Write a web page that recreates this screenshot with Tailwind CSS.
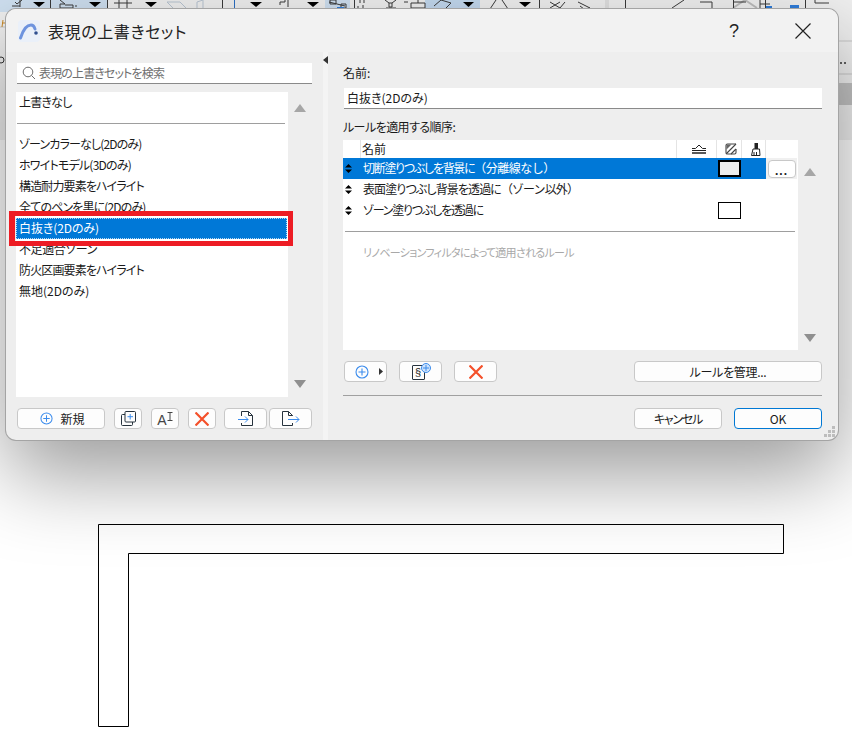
<!DOCTYPE html>
<html lang="ja">
<head>
<meta charset="utf-8">
<script src="https://cdn.jsdelivr.net/npm/@tailwindcss/browser@4"></script>
</head>
<body class="bg-white">
<div class="relative w-[852px] h-[751px] overflow-hidden bg-white font-['Noto_Sans_CJK_JP','Noto_Sans',sans-serif] [font-feature-settings:'palt'] text-[12px] leading-[21px] text-[#1a1a1a]">

  <!-- app toolbar behind the dialog -->
  <svg class="absolute left-0 top-0" width="852" height="140" viewBox="0 0 852 140" fill="none">
    <rect width="852" height="140" fill="#f0f0f0"/>
    <rect x="0" y="0" width="107" height="12" fill="#cfe0f1"/>
    <rect x="325" y="0" width="25" height="12" fill="#cfe0f1"/>
    <rect x="425" y="0" width="55" height="12" fill="#c3d9ef"/>
    <rect x="839" y="83" width="13" height="22" fill="#c4c4c4"/>
    <path d="M839 41H852M839 74H852M0 27H5" stroke="#c8c8c8"/>
    <g fill="#000">
      <path d="M33 2H45L39 7Z"/><path d="M89 2H101L95 7Z"/><path d="M145 2H157L151 7Z"/>
      <path d="M250 2H262L256 7Z"/><path d="M307 2H319L313 7Z"/><path d="M463 2H474L468.500 7Z"/><path d="M519 2H531L525 7Z"/>
    </g>
    <g stroke="#3a3a3a" stroke-width="1">
      <path d="M12 6H20M20 0V7M15 2L17 4L22 0"/>
      <path d="M50.500 0V10M107.500 0V10"/>
      <path d="M60 0L65 4H60V8H73V5H65M75 6H77"/>
      <path d="M114 3H132M119 0V8M127 0V8"/>
      <path d="M222.500 0V10"/>
      <path d="M280 5V2H285V0M288 0V7"/>
      <path d="M329 2L345 6M330 0H336V4H330ZM341 4H346V8H341Z"/>
      <path d="M354.500 0V9M358 6V9M363 5V9M360 0V3M364 0V3"/>
      <path d="M385 0L389 3H392L396 0M389 3V7H392V3M386 8H396"/>
      <path d="M404 2H408M411 3H425V8H411ZM418 0V3"/>
      <path d="M434 6L441 0L451 3L446 8"/>
      <path d="M490 9L496 0M508 9L502 0"/>
      <path d="M539.500 0V10"/>
      <path d="M550 2L560 8L565 2M550 8L560 2"/>
      <path d="M578 2L584 5L590 8L584 9L580 6"/>
      <path d="M625.500 0V10M655 9H650M684 0L672 8M700 2H712V9H704"/>
      <path d="M733 8L745 0L757 8" stroke="#bdbdbd" stroke-width="2"/>
      <path d="M733.500 0V10M733 2H746M765.500 0V10"/>
      <path d="M760 0V8M760 4H770M805.500 0V10"/>
      <path d="M815 3V0M815 3H829"/>
    </g>
    <path d="M606 0V10M608 0L608 10" stroke="#d0d0d0"/>
    <path d="M167 2H180L188 10H175Z" stroke="#b9c5d2"/>
    <path d="M197 2L203 0V9H197Z" stroke="#b9c5d2"/>
    <path d="M234.500 0V10" stroke="#2b6fc4"/>
    <path d="M337 7H344V10H337Z" fill="#2f7ddb"/>
    <path d="M766 6H772V8H766ZM766 9.500H772V11H766Z" fill="#2f7ddb"/>
    <rect x="790" y="5" width="9" height="3" fill="#2f7ddb"/>
    <path d="M2 27L3 20M2 23H5" stroke="#c98a2a"/>
    <circle cx="1" cy="60" r="3" stroke="#333"/>
    <circle cx="841" cy="63" r="1" fill="#333"/><circle cx="845" cy="63" r="1" fill="#333"/>
  </svg>

  <!-- L-shaped outline on the drawing canvas -->
  <svg class="absolute left-0 top-0" width="852" height="751" viewBox="0 0 852 751" fill="none">
    <path d="M98.500 524.500H783.500V553.500H128.500V726.500H98.500Z" stroke="#000" stroke-width="1"/>
  </svg>

  <!-- dialog window -->
  <div class="absolute left-[6px] top-[9px] w-[832px] h-[431px] rounded-[10px] bg-[#eeeeee] ring-1 ring-[#a4a4a4] shadow-[0_34px_84px_rgba(0,0,0,0.4)] overflow-hidden flex flex-col">

    <!-- title bar -->
    <div class="h-[43px] shrink-0 bg-[#f2f2f2] flex items-center">
      <svg class="ml-[12px] shrink-0" width="22" height="22" viewBox="0 0 22 22" fill="none">
        <rect width="22" height="22" rx="4" fill="#eaf0f9"/>
        <path d="M2.500 18C5 10 9 5 13 5C15 5 16.500 7 17 9" stroke="#6d93de" stroke-width="3" stroke-linecap="round"/>
        <circle cx="18" cy="13" r="1.800" fill="#2f4f8f"/>
      </svg>
      <div class="ml-[8px] text-[16px] leading-[22px] text-[#222] tracking-[0.6px]">表現の上書きセット</div>
      <div class="ml-auto mr-[56px] text-[18px] leading-[22px] font-['Liberation_Sans',sans-serif] text-[#222]">?</div>
      <svg class="mr-[27px] shrink-0" width="16" height="16" viewBox="0 0 16 16" fill="none">
        <path d="M0.500 0.500L15.500 15.500M15.500 0.500L0.500 15.500" stroke="#222" stroke-width="1.200"/>
      </svg>
    </div>

    <!-- body -->
    <div class="flex-1 flex min-h-0">

      <!-- left pane -->
      <div class="w-[317px] shrink-0 flex flex-col pt-[11px] pl-[11px]">
        <div class="w-[295px] h-[21px] bg-white border-b border-[#8a8a8a] flex items-center pl-[5px]">
          <svg class="shrink-0" width="14" height="14" viewBox="0 0 14 14" fill="none">
            <circle cx="6" cy="6" r="4.800" stroke="#6e6e6e"/>
            <path d="M9.500 9.500L13 13" stroke="#6e6e6e"/>
          </svg>
          <span class="ml-[3px] mb-[2px] text-[#6f6f6f] tracking-[-0.85px]">表現の上書きセットを検索</span>
        </div>

        <div class="flex mt-[8px] -ml-px">
          <div class="relative w-[272px] h-[305px] bg-white leading-[19px]">
            <div class="pl-[3px] h-[21px] tracking-[-0.8px]">上書きなし</div>
            <div class="h-[21px] flex items-center pl-px pr-[3px]"><div class="w-full h-px bg-[#9e9e9e]"></div></div>
            <div class="pl-[3px] h-[21px] tracking-[-0.85px]">ゾーンカラーなし(2Dのみ)</div>
            <div class="pl-[3px] h-[21px] tracking-[-0.8px]">ホワイトモデル(3Dのみ)</div>
            <div class="pl-[3px] h-[21px] tracking-[-0.85px]">構造耐力要素をハイライト</div>
            <div class="pl-[3px] h-[21px] tracking-[-0.85px]">全てのペンを黒に(2Dのみ)</div>
            <div class="pl-[3px] h-[21px] mr-px bg-[#0078d7] text-white outline-1 outline-dotted outline-white/70 -outline-offset-1 tracking-[-0.1px]">白抜き(2Dのみ)</div>
            <div class="pl-[3px] h-[21px] tracking-[-0.4px]">不足適合ゾーン</div>
            <div class="pl-[3px] h-[21px] tracking-[-0.85px]">防火区画要素をハイライト</div>
            <div class="pl-[3px] h-[21px]">無地(2Dのみ)</div>
            <!-- red annotation frame -->
            <div class="absolute left-[-7px] top-[119px] w-[284px] h-[35px] border-[5px] border-l-[6px] border-[#ed1c24]"></div>
          </div>
          <div class="w-[24px] h-[305px] flex flex-col justify-between items-center pt-[12px] pb-[9px]">
            <svg width="12" height="8" viewBox="0 0 12 8"><path d="M6 0L12 8H0Z" fill="#a6a6a6"/></svg>
            <svg width="12" height="8" viewBox="0 0 12 8"><path d="M0 0H12L6 8Z" fill="#8f8f8f"/></svg>
          </div>
        </div>

        <div class="flex mt-[11px] h-[21px]">
          <button class="w-[88px] h-full bg-[#fdfdfd] border border-[#c8c8c8] rounded-[4px] flex items-center justify-center gap-[7px] pl-[3px] leading-[19px]">
            <svg width="13" height="13" viewBox="0 0 14 14" fill="none"><circle cx="7" cy="7" r="6" stroke="#3b8ced" stroke-width="1.100"/><path d="M7 3.500V10.500M3.500 7H10.500" stroke="#3b8ced" stroke-width="1.100"/></svg>
            <span>新規</span>
          </button>
          <button class="ml-[9px] w-[28px] h-full bg-[#fdfdfd] border border-[#c8c8c8] rounded-[4px] flex items-center justify-center">
            <svg width="15" height="15" viewBox="0 0 15 15" fill="none"><path d="M4 3.500H1.500A1 1 0 0 0 0.500 4.500V13.500A1 1 0 0 0 1.500 14.500H10.500A1 1 0 0 0 11.500 13.500V11" stroke="#26323d"/><rect x="4" y="0.500" width="10.500" height="10.500" rx="1" stroke="#26323d"/><path d="M9.200 3V8.500M6.500 5.700H12" stroke="#3b8ced"/></svg>
          </button>
          <button class="ml-[9px] w-[28px] h-full bg-[#fdfdfd] border border-[#c8c8c8] rounded-[4px] flex items-center justify-center">
            <span class="font-['Liberation_Sans',sans-serif] text-[14px] leading-[14px] text-[#444] mt-[3px]">A</span>
            <svg class="mb-[4px]" width="6" height="9" viewBox="0 0 6 9" fill="none"><path d="M0.500 0.500H5.500M0.500 8.500H5.500M3 0.500V8.500" stroke="#444"/></svg>
          </button>
          <button class="ml-[9px] w-[28px] h-full bg-[#fdfdfd] border border-[#c8c8c8] rounded-[4px] flex items-center justify-center">
            <svg width="14" height="14" viewBox="0 0 14 14" fill="none"><path d="M0.500 0.500L13.500 13.500M13.500 0.500L0.500 13.500" stroke="#f4502a" stroke-width="2.200"/></svg>
          </button>
          <button class="ml-[8px] w-[43px] h-full bg-[#fdfdfd] border border-[#c8c8c8] rounded-[4px] flex items-center justify-center">
            <svg width="16" height="15" viewBox="0 0 16 15" fill="none"><path d="M3.500 5V0.500H10.500L14.500 4.500V14.500H3.500V12" stroke="#26323d"/><path d="M10.500 0.500V4.500H14.500" stroke="#26323d"/><path d="M0 8.500H10M7 5.500L10 8.500L7 11.500" stroke="#3b8ced"/></svg>
          </button>
          <button class="ml-[2px] w-[43px] h-full bg-[#fdfdfd] border border-[#c8c8c8] rounded-[4px] flex items-center justify-center">
            <svg width="18" height="15" viewBox="0 0 18 15" fill="none"><path d="M10.500 5V4.500L6.500 0.500H0.500V14.500H10.500V12" stroke="#26323d"/><path d="M6.500 0.500V4.500H10.500" stroke="#26323d"/><path d="M6 8.500H17M14 5.500L17 8.500L14 11.500" stroke="#3b8ced"/></svg>
          </button>
        </div>
      </div>

      <!-- splitter -->
      <div class="w-[5px] shrink-0 bg-[#f4f4f4] relative">
        <svg class="absolute left-0 top-[4px]" width="5" height="8" viewBox="0 0 5 8"><path d="M5 0V8L0 4Z" fill="#333"/></svg>
      </div>

      <!-- right pane -->
      <div class="flex-1 min-w-0 flex flex-col pl-[15px] pr-[16px]">
        <div class="mt-[10px] h-[21px]">名前:</div>
        <div class="mt-[5px] ml-px h-[21px] bg-white border-b border-[#8a8a8a] pl-[3px] leading-[20px]">白抜き(2Dのみ)</div>
        <div class="mt-[7px] h-[21px] tracking-[-0.55px]">ルールを適用する順序:</div>

        <div class="flex mt-[3px]">
          <div class="w-[455px] h-[210px] bg-white flex flex-col">
            <!-- table header -->
            <div class="h-[18px] shrink-0 grid grid-cols-[18px_316px_40px_25px_24px_32px] leading-[18px] border-b border-[#ffffff]">
              <div class="border-r border-[#e4e4e4]"></div>
              <div class="pl-px border-r border-[#e4e4e4]">名前</div>
              <div class="border-r border-[#e4e4e4] flex items-center justify-center pl-[4px]">
                <svg width="14" height="10" viewBox="0 0 14 10" fill="none"><path d="M0 4.500H3.500L7 1L10.500 4.500H14" stroke="#222"/><path d="M0 6.500H14" stroke="#222"/><path d="M0 9H14" stroke="#222" stroke-width="1.500"/></svg>
              </div>
              <div class="border-r border-[#e4e4e4] flex items-center justify-center pl-[3px]">
                <svg width="12" height="12" viewBox="0 0 12 12" fill="none"><path d="M11 1H2.500Q1 1 1 2.500V9.500Q1 11 2.500 11H9.500Q11 11 11 9.500V6" stroke="#444" stroke-width="1.100"/><path d="M1.500 6.500L6.500 1.500H1.500Z" fill="#666"/><path d="M1 11L11 1M6 11L11 6" stroke="#444" stroke-width="1.100"/></svg>
              </div>
              <div class="border-r border-[#e4e4e4] flex items-center justify-center pl-[5px]">
                <svg width="10" height="13" viewBox="0 0 10 13" fill="none"><rect x="4" y="0.500" width="2.500" height="5" stroke="#222" fill="#222"/><path d="M2 6H8.500L9 12.500H0.500Z" stroke="#222"/><path d="M3 9V12M5.500 9V12" stroke="#222"/></svg>
              </div>
              <div></div>
            </div>

            <!-- rule rows -->
            <div class="h-[21px] shrink-0 bg-[#0078d7] flex items-center text-white relative mr-px">
              <svg class="ml-[2px] shrink-0" width="7" height="9" viewBox="0 0 7 9"><path d="M3.500 0L7 3.500H0ZM0 5.500H7L3.500 9Z" fill="#000"/></svg>
              <span class="ml-[11px] mb-[2px] tracking-[-1.3px]">切断塗りつぶしを背景に</span>
              <span class="mb-[2px] tracking-[-0.5px] [font-feature-settings:normal]">（分離線なし）</span>
              <div class="absolute left-[375px] top-[2px] w-[23px] h-[17px] border-2 border-black bg-[#eeeeee]"></div>
              <div class="absolute left-[423px] top-0 w-[31px] h-[21px] bg-[#f0f0f0] flex items-center justify-center">
                <div class="w-[28px] h-[18px] bg-white border border-[#c8c8c8] rounded-[4px] text-center leading-[20px] font-bold text-[#222] font-['Liberation_Sans',sans-serif] tracking-[1px]">...</div>
              </div>
            </div>
            <div class="h-[21px] shrink-0 flex items-center">
              <svg class="ml-[2px] shrink-0" width="7" height="9" viewBox="0 0 7 9"><path d="M3.500 0L7 3.500H0ZM0 5.500H7L3.500 9Z" fill="#000"/></svg>
              <span class="ml-[11px] mb-[2px] tracking-[-0.9px]">表面塗りつぶし背景を透過に</span>
              <span class="mb-[2px] tracking-[-0.9px] [font-feature-settings:normal]">（ゾーン以外）</span>
            </div>
            <div class="h-[21px] shrink-0 flex items-center relative">
              <svg class="ml-[2px] shrink-0" width="7" height="9" viewBox="0 0 7 9"><path d="M3.500 0L7 3.500H0ZM0 5.500H7L3.500 9Z" fill="#000"/></svg>
              <span class="ml-[11px] mb-[2px] tracking-[-1.2px]">ゾーン塗りつぶしを透過に</span>
              <div class="absolute left-[375px] top-[2px] w-[23px] h-[17px] border border-black bg-white"></div>
            </div>
            <div class="mt-[10px] ml-[2px] mr-[3px] h-px bg-[#9e9e9e] shrink-0"></div>
            <div class="mt-[10px] pl-[20px] text-[11px] text-[#a8a8a8] tracking-[-0.7px]">リノベーションフィルタによって適用されるルール</div>
          </div>
          <div class="w-[24px] h-[210px] flex flex-col justify-between items-center pt-[28px] pb-[8px]">
            <svg width="12" height="8" viewBox="0 0 12 8"><path d="M6 0L12 8H0Z" fill="#a6a6a6"/></svg>
            <svg width="12" height="8" viewBox="0 0 12 8"><path d="M0 0H12L6 8Z" fill="#8f8f8f"/></svg>
          </div>
        </div>

        <div class="flex mt-[11px] h-[21px] ml-px">
          <button class="w-[43px] h-full bg-[#fdfdfd] border border-[#c8c8c8] rounded-[4px] flex items-center pl-[10px] gap-[10px]">
            <svg width="14" height="14" viewBox="0 0 14 14" fill="none"><circle cx="7" cy="7" r="6" stroke="#3b8ced" stroke-width="1.100"/><path d="M7 3.500V10.500M3.500 7H10.500" stroke="#3b8ced" stroke-width="1.100"/></svg>
            <svg width="4" height="7" viewBox="0 0 4 7"><path d="M0 0L4 3.500L0 7Z" fill="#333"/></svg>
          </button>
          <button class="ml-[12px] w-[43px] h-full bg-[#fdfdfd] border border-[#c8c8c8] rounded-[4px] flex items-center justify-center">
            <div class="relative w-[18px] h-[17px]">
              <div class="absolute left-0 top-[2px] w-[13px] h-[15px] border border-[#26323d] rounded-[1px] text-center text-[11px] leading-[13px] font-['Liberation_Sans',sans-serif]">§</div>
              <svg class="absolute right-[-1px] top-0" width="10" height="10" viewBox="0 0 10 10" fill="none"><circle cx="5" cy="5" r="4.500" fill="#cfe3fb" stroke="#3b8ced"/><path d="M5 2V8M2 5H8" stroke="#3b8ced"/></svg>
            </div>
          </button>
          <button class="ml-[12px] w-[43px] h-full bg-[#fdfdfd] border border-[#c8c8c8] rounded-[4px] flex items-center justify-center">
            <svg width="14" height="14" viewBox="0 0 14 14" fill="none"><path d="M0.500 0.500L13.500 13.500M13.500 0.500L0.500 13.500" stroke="#f4502a" stroke-width="2.200"/></svg>
          </button>
          <button class="ml-auto w-[188px] h-full bg-[#fdfdfd] border border-[#c8c8c8] rounded-[4px] leading-[19px] text-center tracking-[-0.3px]">ルールを管理...</button>
        </div>

        <div class="mt-[13px] h-px bg-[#a0a0a0]"></div>

        <div class="flex justify-end mt-[12px] h-[21px]">
          <button class="w-[88px] h-full bg-[#fdfdfd] border border-[#c8c8c8] rounded-[4px] leading-[19px] text-center tracking-[-1.2px]">キャンセル</button>
          <button class="ml-[12px] w-[88px] h-full bg-[#fdfdfd] border border-[#0078d4] rounded-[4px] leading-[19px] text-center">OK</button>
        </div>
      </div>
    </div>

    <!-- resize grip -->
    <svg class="absolute right-[3px] bottom-[3px]" width="11" height="11" viewBox="0 0 11 11"><path d="M8 0H11V3H8ZM8 4H11V7H8ZM8 8H11V11H8ZM4 4H7V7H4ZM4 8H7V11H4ZM0 8H3V11H0Z" fill="#bdbdbd"/></svg>
  </div>
</div>
</body>
</html>
